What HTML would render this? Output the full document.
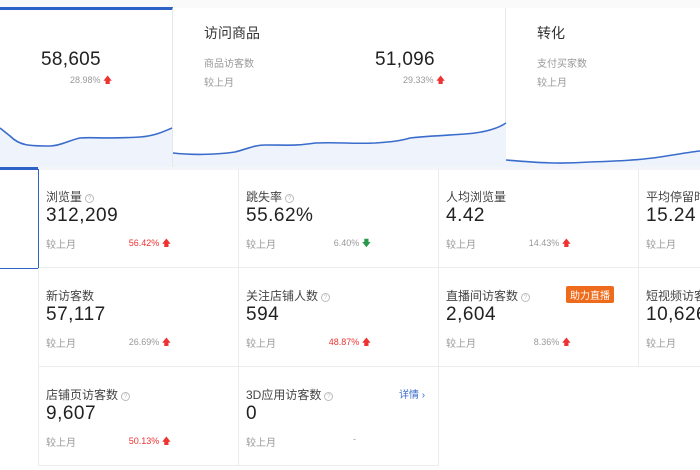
<!DOCTYPE html><html><head><meta charset="utf-8"><style>
*{margin:0;padding:0;box-sizing:border-box}
body{width:700px;height:470px;background:#fff;font-family:"Liberation Sans","Noto Sans CJK SC",sans-serif;position:relative;overflow:hidden;color:#333}
.a{position:absolute}
.card{position:absolute;top:8px;height:160px;background:#fff;border-right:1px solid #e8e8e8}
.t{font-size:14px;color:#333}
.s{font-size:10px;color:#999}
.big{font-size:19px;color:#222;letter-spacing:.3px}
.cell{position:absolute;border-right:1px solid #ececec;border-bottom:1px solid #ececec;width:200px;height:99px}
.lab{position:absolute;left:7px;top:19px;font-size:12px;color:#444}
.val{position:absolute;left:7px;top:36px;font-size:19px;color:#222;letter-spacing:.5px}
.cmp{position:absolute;left:7px;top:67px;font-size:10px;color:#999}
.pct{position:absolute;left:86px;top:67px;font-size:9px;width:46px;text-align:right}
.up{color:#e33}.g{color:#999}
.q{display:inline-block;width:9px;height:9px;border:1px solid #bbb;border-radius:50%;font-size:6px;line-height:8px;text-align:center;color:#bbb;vertical-align:1px;margin-left:3px}
</style></head><body>
<div class="a" style="left:0;top:0;width:700px;height:8px;background:#fafafa"></div>
<div class="card" style="left:0;width:173px;border-top:3px solid #2f62c6;top:7px"></div>
<div class="card" style="left:173px;width:333px"></div>
<div class="card" style="left:506px;width:194px;border-right:none"></div>
<svg class="a" style="left:0;top:0" width="700" height="170">
<path d="M0,128 L10,136 C20,146 30,146 50,146 C60,146 70,140 80,138 C90,137 110,139 140,137 C155,136 165,131 172,128 L172,168 L0,168Z" fill="#eef3fc"/>
<path d="M0,128 L10,136 C20,146 30,146 50,146 C60,146 70,140 80,138 C90,137 110,139 140,137 C155,136 165,131 172,128" stroke="#3a6ccc" stroke-width="1.6" fill="none"/>
<path d="M173,153 C190,155 215,155 235,152 C250,148 255,145 265,145 C290,145 295,146 315,143 C340,142 350,144 375,143 C390,142 400,141 410,138 C440,135 460,135 475,133 C490,131 500,127 506,123 L506,168 L173,168Z" fill="#eef3fc"/>
<path d="M173,153 C190,155 215,155 235,152 C250,148 255,145 265,145 C290,145 295,146 315,143 C340,142 350,144 375,143 C390,142 400,141 410,138 C440,135 460,135 475,133 C490,131 500,127 506,123" stroke="#3a6ccc" stroke-width="1.6" fill="none"/>
<path d="M506,160 C540,163 560,164 590,162 C620,161 640,160 660,157 C680,154 690,152 700,151 L700,168 L506,168Z" fill="#eef3fc"/>
<path d="M506,160 C540,163 560,164 590,162 C620,161 640,160 660,157 C680,154 690,152 700,151" stroke="#3a6ccc" stroke-width="1.6" fill="none"/>
<rect x="0" y="167" width="700" height="3" fill="#f3f5f8"/>
<rect x="0" y="167" width="38" height="2" fill="#2f62c6"/>
</svg>
<div class="a big" style="left:41px;top:49px">58,605</div>
<div class="a" style="left:70px;top:73px;font-size:9px;color:#999">28.98% <span class="up">🡅</span></div>
<div class="a t" style="left:204px;top:23px">访问商品</div>
<div class="a s" style="left:204px;top:55px">商品访客数</div>
<div class="a s" style="left:204px;top:74px">较上月</div>
<div class="a big" style="left:375px;top:49px">51,096</div>
<div class="a" style="left:403px;top:73px;font-size:9px;color:#999">29.33% <span class="up">🡅</span></div>
<div class="a t" style="left:537px;top:23px">转化</div>
<div class="a s" style="left:537px;top:55px">支付买家数</div>
<div class="a s" style="left:537px;top:74px">较上月</div>

<div class="a" style="left:0;top:169px;width:39px;height:100px;border:1.5px solid #2f62c6;border-left:none"></div>
<div class="a" style="left:38px;top:268px;width:1px;height:198px;background:#ececec"></div>

<div class="cell" style="left:39px;top:169px"><div class="lab">浏览量<span class="q">?</span></div><div class="val">312,209</div><div class="cmp">较上月</div><div class="pct up">56.42% 🡅</div></div>
<div class="cell" style="left:239px;top:169px"><div class="lab">跳失率<span class="q">?</span></div><div class="val">55.62%</div><div class="cmp">较上月</div><div class="pct g">6.40% <span style="color:#2a9a4a">🡇</span></div></div>
<div class="cell" style="left:439px;top:169px"><div class="lab">人均浏览量</div><div class="val">4.42</div><div class="cmp">较上月</div><div class="pct g">14.43% <span class="up">🡅</span></div></div>
<div class="cell" style="left:639px;top:169px"><div class="lab">平均停留时长</div><div class="val">15.24</div><div class="cmp">较上月</div></div>
<div class="cell" style="left:39px;top:268px"><div class="lab">新访客数</div><div class="val">57,117</div><div class="cmp">较上月</div><div class="pct g">26.69% <span class="up">🡅</span></div></div>
<div class="cell" style="left:239px;top:268px"><div class="lab">关注店铺人数<span class="q">?</span></div><div class="val">594</div><div class="cmp">较上月</div><div class="pct up">48.87% 🡅</div></div>
<div class="cell" style="left:439px;top:268px"><div class="lab">直播间访客数<span class="q">?</span></div><div class="a" style="left:127px;top:18px;background:#ee6b1b;color:#fff;font-size:10px;padding:1px 4px;border-radius:2px">助力直播</div><div class="val">2,604</div><div class="cmp">较上月</div><div class="pct g">8.36% <span class="up">🡅</span></div></div>
<div class="cell" style="left:639px;top:268px"><div class="lab">短视频访客数</div><div class="val">10,626</div><div class="cmp">较上月</div></div>
<div class="cell" style="left:39px;top:367px"><div class="lab">店铺页访客数<span class="q">?</span></div><div class="val">9,607</div><div class="cmp">较上月</div><div class="pct up">50.13% 🡅</div></div>
<div class="cell" style="left:239px;top:367px"><div class="lab">3D应用访客数<span class="q">?</span></div><div class="a" style="left:160px;top:19px;font-size:10px;color:#3a6ccc">详情 ›</div><div class="val">0</div><div class="cmp">较上月</div><div class="a" style="left:114px;top:67px;font-size:9px;color:#999">-</div></div>
</body></html>
